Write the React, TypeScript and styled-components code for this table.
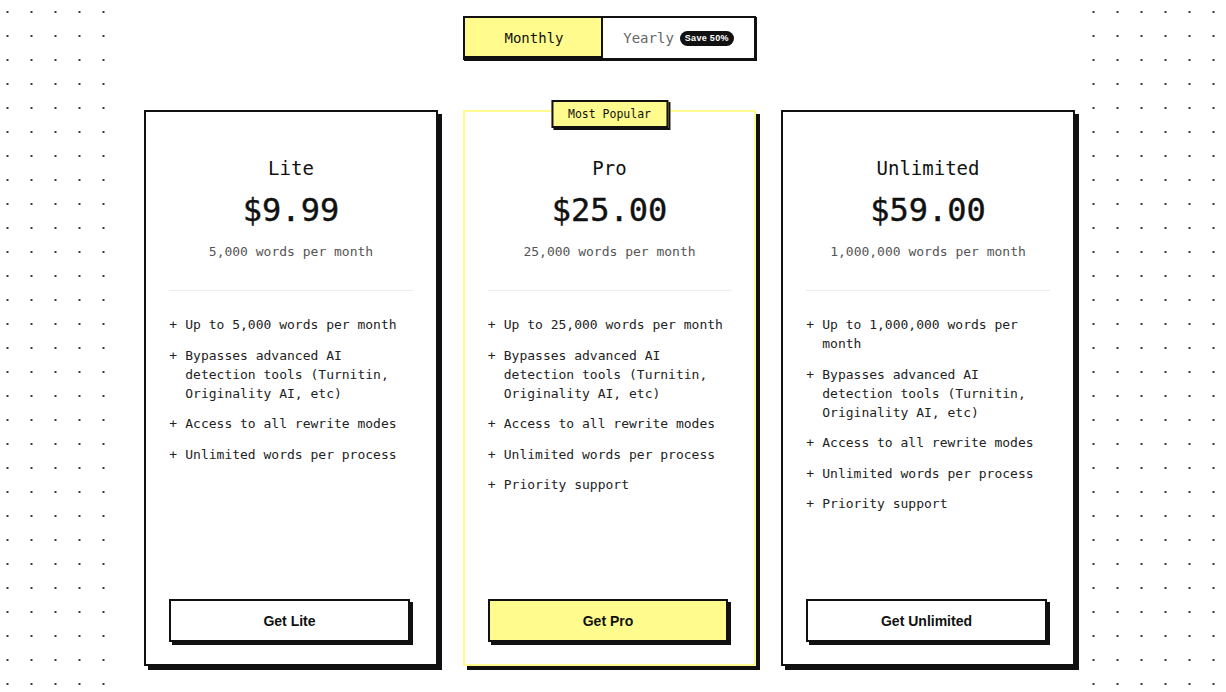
import React, { useState } from 'react'
import styled, { createGlobalStyle } from 'styled-components'

const YELLOW = '#fffb8c'
const MONO = '"DejaVu Sans Mono", "Liberation Mono", monospace'

const GlobalStyle = createGlobalStyle`
  html, body {
    margin: 0;
    padding: 0;
    background: #fff;
  }
  body {
    font-family: ${MONO};
    color: #111;
  }
`

type Plan = {
  name: string
  price: string
  quota: string
  features: string[]
  featured?: boolean
}

const plans: Plan[] = [
  {
    name: 'Lite',
    price: '$9.99',
    quota: '5,000 words per month',
    features: [
      'Up to 5,000 words per month',
      'Bypasses advanced AI detection tools (Turnitin, Originality AI, etc)',
      'Access to all rewrite modes',
      'Unlimited words per process',
    ],
  },
  {
    name: 'Pro',
    price: '$25.00',
    quota: '25,000 words per month',
    featured: true,
    features: [
      'Up to 25,000 words per month',
      'Bypasses advanced AI detection tools (Turnitin, Originality AI, etc)',
      'Access to all rewrite modes',
      'Unlimited words per process',
      'Priority support',
    ],
  },
  {
    name: 'Unlimited',
    price: '$59.00',
    quota: '1,000,000 words per month',
    features: [
      'Up to 1,000,000 words per month',
      'Bypasses advanced AI detection tools (Turnitin, Originality AI, etc)',
      'Access to all rewrite modes',
      'Unlimited words per process',
      'Priority support',
    ],
  },
]

const Page = styled.div`
  display: flex;
  min-height: 692px;
`

const Gutter = styled.div<{ $offset: number; $width?: number }>`
  flex: ${p => (p.$width ? `0 0 ${p.$width}px` : '1 1 auto')};
  background-image: radial-gradient(circle at center, #3a3a3a 0.8px, transparent 1.4px);
  background-size: 24px 24px;
  background-position: ${p => p.$offset}px 0;
`

const Main = styled.main`
  flex: 0 0 970px;
  box-sizing: border-box;
  padding: 16px 12px 0 28px;
  background: #fff;
`

const Content = styled.div`
  width: 931px;
  display: flex;
  flex-direction: column;
  align-items: center;
`

const Toggle = styled.div`
  display: flex;
  height: 44px;
  box-sizing: border-box;
  border: 2px solid #111;
  box-shadow: 1px 1px 0 #111;
  background: #fff;
`

const ToggleOption = styled.button<{ $active: boolean }>`
  display: flex;
  align-items: center;
  justify-content: center;
  gap: 6px;
  border: 0;
  margin: 0;
  padding: 0 12px;
  white-space: nowrap;
  font-family: ${MONO};
  font-size: 14px;
  cursor: pointer;
  color: ${p => (p.$active ? '#111' : '#666')};
  background: ${p => (p.$active ? YELLOW : '#fff')};
  box-shadow: ${p => (p.$active ? 'inset -2px -2px 0 #111' : 'none')};
  width: ${p => (p.$active ? '138px' : '151px')};
`

const SaveBadge = styled.span`
  display: inline-flex;
  align-items: center;
  height: 15px;
  padding: 0 5px;
  border-radius: 8px;
  background: #111;
  color: #fff;
  font-size: 9px;
  font-weight: bold;
  white-space: nowrap;
  font-family: "Liberation Sans", Arial, sans-serif;
  letter-spacing: 0.3px;
`

const Cards = styled.div`
  margin-top: 50px;
  display: grid;
  grid-template-columns: repeat(3, 293.5px);
  gap: 25px;
`

const Card = styled.div<{ $featured?: boolean }>`
  position: relative;
  display: flex;
  flex-direction: column;
  box-sizing: border-box;
  min-height: 556px;
  padding: 44px 23px 22px;
  background: #fff;
  border: 2px solid ${p => (p.$featured ? YELLOW : '#111')};
  box-shadow: 4px 4px 0 #111;
`

const PopularTag = styled.div`
  position: absolute;
  top: -12px;
  left: 50%;
  transform: translateX(-50%);
  height: 28px;
  box-sizing: border-box;
  padding: 0 15px;
  display: flex;
  align-items: center;
  white-space: nowrap;
  background: ${YELLOW};
  border: 2px solid #111;
  box-shadow: 2px 2px 0 #111;
  font-size: 11.5px;
`

const PlanName = styled.h2`
  margin: 0;
  font-size: 19px;
  line-height: 24px;
  font-weight: normal;
  text-align: center;
`

const Price = styled.div`
  margin-top: 10px;
  font-size: 32px;
  line-height: 40px;
  text-align: center;
  -webkit-text-stroke: 0.4px #111;
`

const Quota = styled.div`
  margin-top: 12px;
  font-size: 13px;
  line-height: 20px;
  color: #555;
  text-align: center;
`

const Divider = styled.hr`
  margin: 28px 0 24px;
  border: 0;
  height: 1px;
  background: #ececec;
`

const Features = styled.ul`
  list-style: none;
  margin: 0;
  padding: 0;
  display: flex;
  flex-direction: column;
  gap: 11.5px;
`

const Feature = styled.li`
  display: flex;
  font-size: 13px;
  line-height: 19px;
  color: #222;
`

const Plus = styled.span`
  flex: 0 0 16px;
`

const CtaButton = styled.button<{ $featured?: boolean }>`
  margin-top: auto;
  width: calc(100% - 3px);
  height: 43px;
  border: 2px solid #111;
  box-shadow: 3px 3px 0 #111;
  background: ${p => (p.$featured ? YELLOW : '#fff')};
  font-family: "Liberation Sans", Arial, sans-serif;
  font-weight: bold;
  font-size: 14px;
  color: #111;
  cursor: pointer;
`

const PlanCard = ({ plan }: { plan: Plan }) => (
  <Card $featured={plan.featured}>
    {plan.featured && <PopularTag>Most Popular</PopularTag>}
    <PlanName>{plan.name}</PlanName>
    <Price>{plan.price}</Price>
    <Quota>{plan.quota}</Quota>
    <Divider />
    <Features>
      {plan.features.map(f => (
        <Feature key={f}>
          <Plus>+</Plus>
          <span>{f}</span>
        </Feature>
      ))}
    </Features>
    <CtaButton $featured={plan.featured}>Get {plan.name}</CtaButton>
  </Card>
)

export default function App() {
  const [yearly, setYearly] = useState(false)

  return (
    <>
      <GlobalStyle />
      <Page>
        <Gutter $width={116} $offset={-4.5} />
        <Main>
          <Content>
            <Toggle>
              <ToggleOption $active={!yearly} onClick={() => setYearly(false)}>
                Monthly
              </ToggleOption>
              <ToggleOption $active={yearly} onClick={() => setYearly(true)}>
                Yearly <SaveBadge>Save 50%</SaveBadge>
              </ToggleOption>
            </Toggle>
            <Cards>
              {plans.map(p => (
                <PlanCard key={p.name} plan={p} />
              ))}
            </Cards>
          </Content>
        </Main>
        <Gutter $offset={-5.5} />
      </Page>
    </>
  )
}
